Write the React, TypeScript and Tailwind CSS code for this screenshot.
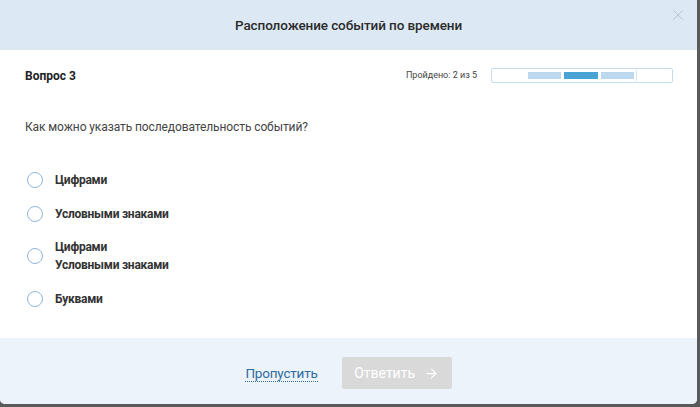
import { ArrowRight, X } from "lucide-react";

const options = [
  { id: 1, lines: ["Цифрами"] },
  { id: 2, lines: ["Условными знаками"] },
  { id: 3, lines: ["Цифрами", "Условными знаками"] },
  { id: 4, lines: ["Буквами"] },
];

// 0 — пусто, 1 — пройдено, 2 — текущий
const steps = [0, 1, 2, 1, 0];

export default function App() {
  return (
    <div
      className="w-[700px] h-[407px] bg-[#5a5a5a] overflow-hidden"
      style={{ fontFamily: 'Roboto, "Liberation Sans", sans-serif' }}
    >
      <div className="w-[697px] h-[404px] bg-white rounded-b-[5px] overflow-hidden flex flex-col">
        {/* Header */}
        <div className="relative h-[50px] shrink-0 bg-[#dce9f5] flex items-center justify-center">
          <h1 className="text-[13.5px] text-[#2b2b2b] font-medium tracking-[-0.1px]">
            Расположение событий по времени
          </h1>
          <button className="absolute right-[10px] top-[6px] text-[#b9c4cf]">
            <X size={18} strokeWidth={1.3} />
          </button>
        </div>

        {/* Body */}
        <div className="flex-1 pl-[25px] pr-[24px]">
          <div className="flex items-center justify-between h-[50px] pt-[1px]">
            <span className="text-[12px] font-bold text-[#222]">Вопрос 3</span>
            <div className="flex items-center gap-[14px]">
              <span className="text-[9px] text-[#444]">Пройдено: 2 из 5</span>
              <div className="flex border border-[#c5dcef] rounded-[2px] w-[182px] h-[15px] p-[1px]">
                {steps.map((s, i) => (
                  <div
                    key={i}
                    className={
                      "flex-1 h-full border-l border-[#d7e6f3] first:border-l-0 " +
                      (s === 2
                        ? "bg-[#4aa3d5] border-2 border-white"
                        : s === 1
                        ? "bg-[#bcd8ee] border-2 border-white"
                        : "bg-white")
                    }
                  />
                ))}
              </div>
            </div>
          </div>

          <p className="mt-[18px] text-[12px] text-[#444] tracking-[-0.1px]">
            Как можно указать последовательность событий?
          </p>

          <div className="mt-[35px] flex flex-col gap-[15.5px]">
            {options.map((o) => (
              <label key={o.id} className="flex items-center gap-[12px]">
                <span className="ml-[2px] w-[16px] h-[16px] rounded-full border border-[#8cb6e0] bg-white shrink-0" />
                <span className="flex flex-col text-[12px] font-bold text-[#333] leading-[18px] tracking-[-0.25px]">
                  {o.lines.map((l) => (
                    <span key={l}>{l}</span>
                  ))}
                </span>
              </label>
            ))}
          </div>
        </div>

        {/* Footer */}
        <div className="h-[66px] shrink-0 bg-[#ecf3fa] flex items-center justify-center gap-[24px] pt-[4px]">
          <a className="text-[13.5px] text-[#2e6b9e] border-b border-dotted border-[#2e6b9e] leading-[16px] tracking-[-0.2px]">
            Пропустить
          </a>
          <button className="w-[110px] h-[32px] bg-[#d9d9d9] text-white text-[14px] flex items-center justify-center gap-[9px] rounded-[2px]">
            Ответить
            <ArrowRight size={15} strokeWidth={2} />
          </button>
        </div>
      </div>
    </div>
  );
}
